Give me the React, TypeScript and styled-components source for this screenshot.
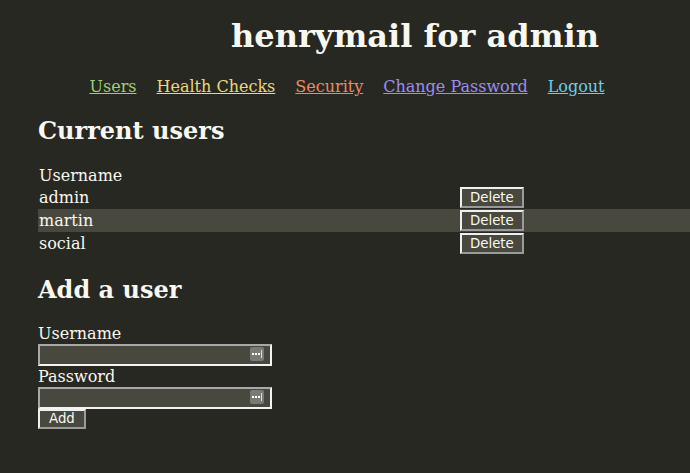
import React from "react";
import styled, { createGlobalStyle } from "styled-components";

const Global = createGlobalStyle`
  html, body { margin: 0; padding: 0; }
  body {
    background: #272822;
    color: #f8f8f2;
    font-family: "DejaVu Serif", serif;
    font-size: 16px;
    overflow: hidden;
  }
`;

const Page = styled.div`
  width: 690px;
  height: 473px;
  display: flex;
  flex-direction: column;
`;

const Header = styled.header`
  padding: 18px 0 0 140px;
  text-align: center;
`;

const Title = styled.h1`
  margin: 0;
  font-size: 32px;
  font-weight: bold;
  line-height: 37px;
`;

const Nav = styled.nav`
  display: flex;
  justify-content: center;
  gap: 20px;
  margin-top: 22px;
  padding-left: 4px;
  line-height: 19px;
`;

const NavLink = styled.a<{ $color: string }>`
  color: ${(p) => p.$color};
  text-decoration: underline;
  cursor: pointer;
`;

const Main = styled.main`
  padding-left: 38px;
`;

const SectionTitle = styled.h2<{ $top: number }>`
  margin: ${(p) => p.$top}px 0 0;
  font-size: 24px;
  font-weight: bold;
  line-height: 28px;
`;

const Table = styled.div`
  display: grid;
  grid-template-columns: 421px 1fr;
  margin-top: 19px;
`;

const Cell = styled.div<{ $hl?: boolean; $head?: boolean }>`
  height: ${(p) => (p.$head ? 22 : 23)}px;
  padding-left: 1px;
  background: ${(p) => (p.$hl ? "#49483e" : "transparent")};
  display: flex;
  align-items: center;
`;

const Btn = styled.button`
  font-family: "DejaVu Sans", sans-serif;
  font-size: 13.33px;
  color: #f8f8f2;
  background: #49483e;
  border: 2px solid;
  border-color: #f0f0f0 #9a9a9a #9a9a9a #f0f0f0;
  padding: 0 8px;
  height: 21px;
  line-height: 16px;
  cursor: pointer;
`;

const Form = styled.form`
  display: flex;
  flex-direction: column;
  align-items: flex-start;
  margin-top: 19px;
`;

const Label = styled.label`
  line-height: 21px;
`;

const InputWrap = styled.div`
  position: relative;
  width: 234px;
  height: 22px;
`;

const Input = styled.input`
  box-sizing: border-box;
  width: 234px;
  height: 22px;
  background: #49483e;
  color: #f8f8f2;
  border: 2px solid;
  border-color: #a8a8a8 #f4f4f4 #f4f4f4 #a8a8a8;
  padding: 0 24px 0 2px;
  outline: none;
  font-family: "DejaVu Sans", sans-serif;
`;

const KeyIcon = styled.span`
  position: absolute;
  right: 8px;
  top: 3px;
  width: 14px;
  height: 14px;
  border-radius: 2px;
  background: #7a7a74;
  display: flex;
  align-items: center;
  justify-content: center;
`;

const AddBtn = styled(Btn)`
  padding: 0 9px;
  height: 20px;
`;

const Dots = () => (
  <svg width="12" height="8" viewBox="0 0 12 8">
    <rect x="1" y="3" width="2" height="2" fill="#fff" />
    <rect x="4" y="3" width="2" height="2" fill="#fff" />
    <rect x="7" y="3" width="2" height="2" fill="#fff" />
    <rect x="10" y="0" width="1" height="8" fill="#ddd" />
  </svg>
);

const users = ["admin", "martin", "social"];

const links: [string, string][] = [
  ["Users", "#9ed072"],
  ["Health Checks", "#eed778"],
  ["Security", "#ef8a5e"],
  ["Change Password", "#9d8df1"],
  ["Logout", "#70cde6"],
];

export default function App() {
  return (
    <Page>
      <Global />
      <Header>
        <Title>henrymail for admin</Title>
      </Header>
      <Nav>
        {links.map(([t, c]) => (
          <NavLink key={t} $color={c}>
            {t}
          </NavLink>
        ))}
      </Nav>
      <Main>
        <SectionTitle $top={21}>Current users</SectionTitle>
        <Table>
          <Cell $head>Username</Cell>
          <Cell $head />
          {users.map((u) => (
            <React.Fragment key={u}>
              <Cell $hl={u === "martin"}>{u}</Cell>
              <Cell $hl={u === "martin"}>
                <Btn type="button">Delete</Btn>
              </Cell>
            </React.Fragment>
          ))}
        </Table>
        <SectionTitle $top={21}>Add a user</SectionTitle>
        <Form onSubmit={(e) => e.preventDefault()}>
          <Label>Username</Label>
          <InputWrap>
            <Input type="text" />
            <KeyIcon>
              <Dots />
            </KeyIcon>
          </InputWrap>
          <Label>Password</Label>
          <InputWrap>
            <Input type="password" />
            <KeyIcon>
              <Dots />
            </KeyIcon>
          </InputWrap>
          <AddBtn type="submit">Add</AddBtn>
        </Form>
      </Main>
    </Page>
  );
}
